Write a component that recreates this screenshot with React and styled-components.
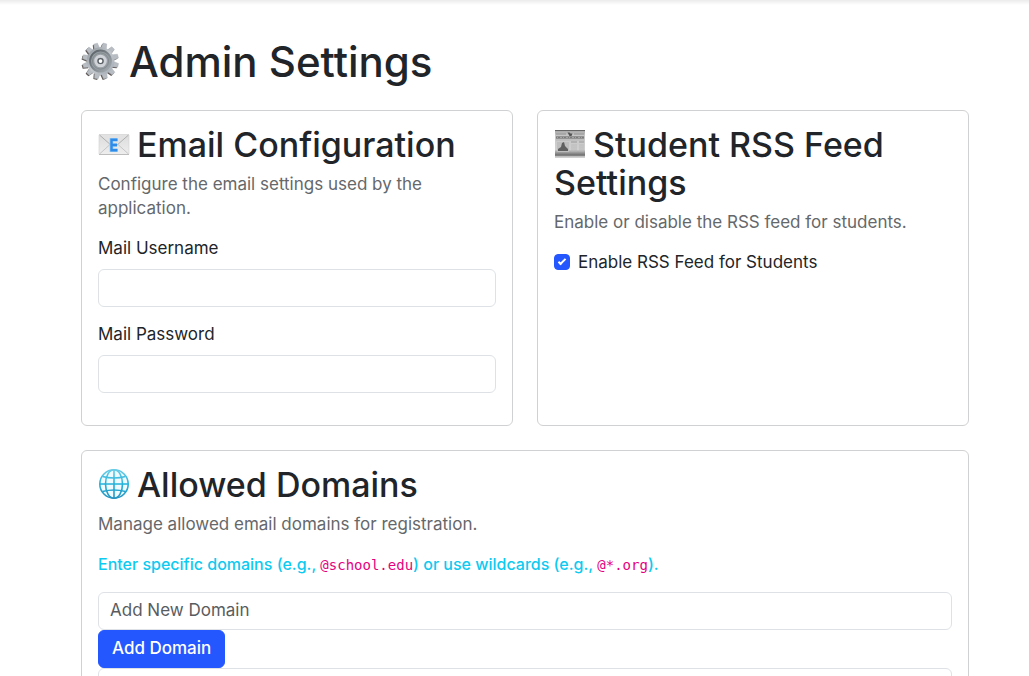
import React, { useState } from "react";
import styled, { createGlobalStyle } from "styled-components";

const GlobalStyle = createGlobalStyle`
  *, *::before, *::after { box-sizing: border-box; }
  body {
    margin: 0;
    background: #fff;
    color: #212529;
    font-family: Inter, "Open Sans", sans-serif;
    font-size: 17px;
    line-height: 24px;
  }
`;

const Page = styled.div`
  height: 100vh;
  overflow-y: auto;
  scrollbar-width: none;
  background: linear-gradient(#ebebeb, #fff 5px);
`;

const Main = styled.main`
  padding: 38px 60px 24px 81px;
`;

const PageTitle = styled.h1`
  display: flex;
  align-items: center;
  gap: 8px;
  margin: 0 0 24px;
  font-size: 42px;
  line-height: 48px;
  font-weight: 500;
`;

const Columns = styled.div`
  display: grid;
  grid-template-columns: repeat(auto-fit, minmax(320px, 1fr));
  gap: 24px;
  margin-bottom: 24px;
`;

const Card = styled.section`
  padding: 15px 16px 17px;
  border: 1px solid #d0d1d2;
  border-radius: 6px;
  background: #fff;
`;

const CardTitle = styled.h2`
  margin: 0 0 8px;
  font-size: 34px;
  line-height: 38px;
  font-weight: 500;

  svg {
    margin-right: 7px;
    vertical-align: -3px;
  }
`;

const Text = styled.p`
  margin: 0 0 16px;
  color: ${(p) => (p.$tone === "info" ? "#0dcaf0" : "#65686b")};
  font-size: ${(p) => (p.$tone === "info" ? "16px" : "17px")};
  font-weight: ${(p) => (p.$tone === "info" ? 500 : 400)};
`;

const Code = styled.code`
  color: #e6007e;
  font-family: "DejaVu Sans Mono", monospace;
  font-size: 14px;
  line-height: 20px;
`;

const Field = styled.div`
  margin-bottom: 15px;
`;

const Label = styled.label`
  display: block;
  margin-bottom: 9px;
`;

const TextInput = styled.input`
  display: block;
  width: 100%;
  height: 38px;
  padding: 5px 11px 7px;
  border: 1px solid #dee2e6;
  border-radius: 6px;
  background: #fff;
  color: #212529;
  font: inherit;

  &::placeholder {
    color: #595c5f;
    opacity: 1;
  }
`;

const CheckRow = styled.label`
  display: flex;
  align-items: center;
  gap: 8px;
`;

const Checkbox = styled.input`
  appearance: none;
  width: 16px;
  height: 16px;
  margin: 0;
  border: 1px solid #dee2e6;
  border-radius: 4px;
  display: grid;
  place-items: center;

  &:checked {
    border-color: #2557ff;
    background: #2557ff;
  }

  &:checked::before {
    content: "";
    width: 8px;
    height: 4px;
    border-left: 2px solid #fff;
    border-bottom: 2px solid #fff;
    transform: translateY(-1px) rotate(-45deg);
  }
`;

const Button = styled.button`
  display: block;
  height: 38px;
  padding: 5px 13px 7px;
  border: 1px solid #2557ff;
  border-radius: 6px;
  background: #2557ff;
  color: #fff;
  font: inherit;
  font-weight: 500;
`;

const DomainList = styled.ul`
  margin: 0;
  padding: 0;
  list-style: none;
  border: 1px solid #dee2e6;
  border-radius: 6px;
  min-height: 42px;
`;

function GearIcon() {
  const teeth = Array.from({ length: 12 }, (_, i) => i * 30 + 14);
  return (
    <svg width="40" height="40" viewBox="-0.500 0 42 42" aria-hidden="true">
      <defs>
        <linearGradient id="steel" x1="0" y1="0" x2="1" y2="1">
          <stop offset="0" stopColor="#8c959b" />
          <stop offset="0.5" stopColor="#c3c8cd" />
          <stop offset="1" stopColor="#a2a9b2" />
        </linearGradient>
        <linearGradient id="rim" x1="0" y1="0" x2="1" y2="1">
          <stop offset="0" stopColor="#555d62" />
          <stop offset="1" stopColor="#a9b0b6" />
        </linearGradient>
      </defs>
      <g transform="translate(-1 1)" fill="#5d5654">
        {teeth.map((a) => (
          <path key={a} d="M17 7 18 1h4L23 7z" transform={`rotate(${a} 20 20)`} />
        ))}
      </g>
      <g fill="#b8bdc3" stroke="#a2a9b0" strokeWidth="0.400">
        {teeth.map((a) => (
          <path key={a} d="M17 7.500 18 1h4L23 7.500z" transform={`rotate(${a} 20 20)`} />
        ))}
      </g>
      <circle cx="20" cy="20" r="14.500" fill="url(#steel)" />
      <circle cx="20" cy="20" r="11" fill="#989fa4" stroke="url(#rim)" strokeWidth="2" />
      <circle cx="20" cy="20" r="8.500" fill="none" stroke="#7b8388" strokeWidth="0.800" />
      <circle cx="20" cy="20" r="5" fill="#858c92" stroke="#d0d3d8" strokeWidth="3.200" />
      <circle cx="20" cy="20" r="2.600" fill="#fff" stroke="#555c61" strokeWidth="1.200" />
    </svg>
  );
}

function EmailIcon() {
  return (
    <svg width="32" height="32" viewBox="0 0 32 32" aria-hidden="true">
      <defs>
        <linearGradient id="paper" x1="0" y1="0" x2="0" y2="1">
          <stop offset="0" stopColor="#dcdcdc" />
          <stop offset="1" stopColor="#eeeeee" />
        </linearGradient>
      </defs>
      <rect x="1" y="6.500" width="30" height="20" rx="0.800" fill="url(#paper)" stroke="#d0d0d0" strokeWidth="0.600" />
      <path d="M1.500 26 12 16.500M30.500 26 20 16.500" stroke="#c6c6c6" fill="none" />
      <path d="M1.500 7 14 18q2 1.700 4 0L30.500 7" stroke="#b0b0b0" fill="#e2e2e2" />
      <path d="M1 26.500h30" stroke="#bdbdbd" />
      <path d="M19.500 11.800h-6v10.400h6M13.500 17h5.500" fill="none" stroke="#9bd0f8" strokeWidth="3.800" />
      <path d="M19.500 11.800h-6v10.400h6M13.500 17h5.500" fill="none" stroke="#2e8be8" strokeWidth="2.400" />
    </svg>
  );
}

function NewsIcon() {
  return (
    <svg width="32" height="32" viewBox="0 0 32 32" aria-hidden="true">
      <defs>
        <linearGradient id="news" x1="0" y1="0" x2="0" y2="1">
          <stop offset="0" stopColor="#a3a3a3" />
          <stop offset="0.200" stopColor="#c7c7c7" />
          <stop offset="0.700" stopColor="#cfcfcf" />
          <stop offset="0.900" stopColor="#6c6c6c" />
          <stop offset="0.940" stopColor="#bcbcbc" />
          <stop offset="1" stopColor="#d9d9d9" />
        </linearGradient>
      </defs>
      <rect x="1" y="2" width="30" height="28" fill="url(#news)" />
      <path d="M1 2.500h30" stroke="#666" />
      <path d="M13.500 4.500h2l1 1h2l-1 2.500h-2z" fill="#555" />
      <path d="M2 6h10M20 6h10" stroke="#929292" />
      <path d="M2 9.500h28" stroke="#7c7c7c" strokeWidth="2.400" />
      <path d="M3 9.500h26" stroke="#a5a5a5" strokeWidth="1" strokeDasharray="1 2 2 1" />
      <path d="M2 12h28" stroke="#b5b5b5" />
      <rect x="3" y="14" width="12" height="10" fill="#bebebe" />
      <path d="M4 23v-2l3-2 1-4 2-1 1 4 3 3v2z" fill="#606060" />
      <path d="M17 14h6M25 14h5" stroke="#999" />
      <path d="M17 17h6M25 17h5M17 19h6M25 19h5M17 21h6M25 21h5M17 23h6M25 23h5" stroke="#b5b5b5" strokeWidth="0.800" />
    </svg>
  );
}

function GlobeIcon() {
  return (
    <svg width="32" height="32" viewBox="0 0 32 32" aria-hidden="true">
      <defs>
        <linearGradient id="sea" gradientUnits="userSpaceOnUse" x1="0" y1="0" x2="0" y2="32">
          <stop offset="0" stopColor="#72cfe8" />
          <stop offset="0.500" stopColor="#22b2da" />
          <stop offset="1" stopColor="#2790bc" />
        </linearGradient>
      </defs>
      <g fill="none" stroke="url(#sea)" strokeWidth="1.600">
        <circle cx="16" cy="16" r="14.200" fill="#effbff" />
        <ellipse cx="16" cy="16" rx="8.500" ry="14.200" />
        <path d="M16 2v28M2 16h28" />
        <path d="M4.500 8.500q11.500 3 23 0M4.500 23.500q11.500-3 23 0" />
      </g>
    </svg>
  );
}

export default function App() {
  const [rss, setRss] = useState(true);
  return (
    <Page>
      <GlobalStyle />
      <Main>
        <PageTitle>
          <GearIcon />
          Admin Settings
        </PageTitle>
        <Columns>
          <Card>
            <CardTitle><EmailIcon />Email Configuration</CardTitle>
            <Text>Configure the email settings used by the application.</Text>
            <Field>
              <Label htmlFor="mail-username">Mail Username</Label>
              <TextInput id="mail-username" type="text" />
            </Field>
            <Field>
              <Label htmlFor="mail-password">Mail Password</Label>
              <TextInput id="mail-password" type="password" />
            </Field>
          </Card>
          <Card>
            <CardTitle><NewsIcon />Student RSS Feed Settings</CardTitle>
            <Text>Enable or disable the RSS feed for students.</Text>
            <CheckRow>
              <Checkbox type="checkbox" checked={rss} onChange={(e) => setRss(e.target.checked)} />
              Enable RSS Feed for Students
            </CheckRow>
          </Card>
        </Columns>
        <Card>
          <CardTitle><GlobeIcon />Allowed Domains</CardTitle>
          <Text>Manage allowed email domains for registration.</Text>
          <Text $tone="info">
            Enter specific domains (e.g., <Code>@school.edu</Code>) or use wildcards (e.g., <Code>@*.org</Code>).
          </Text>
          <TextInput type="text" placeholder="Add New Domain" aria-label="Add New Domain" />
          <Button type="button">Add Domain</Button>
          <DomainList />
        </Card>
      </Main>
    </Page>
  );
}
